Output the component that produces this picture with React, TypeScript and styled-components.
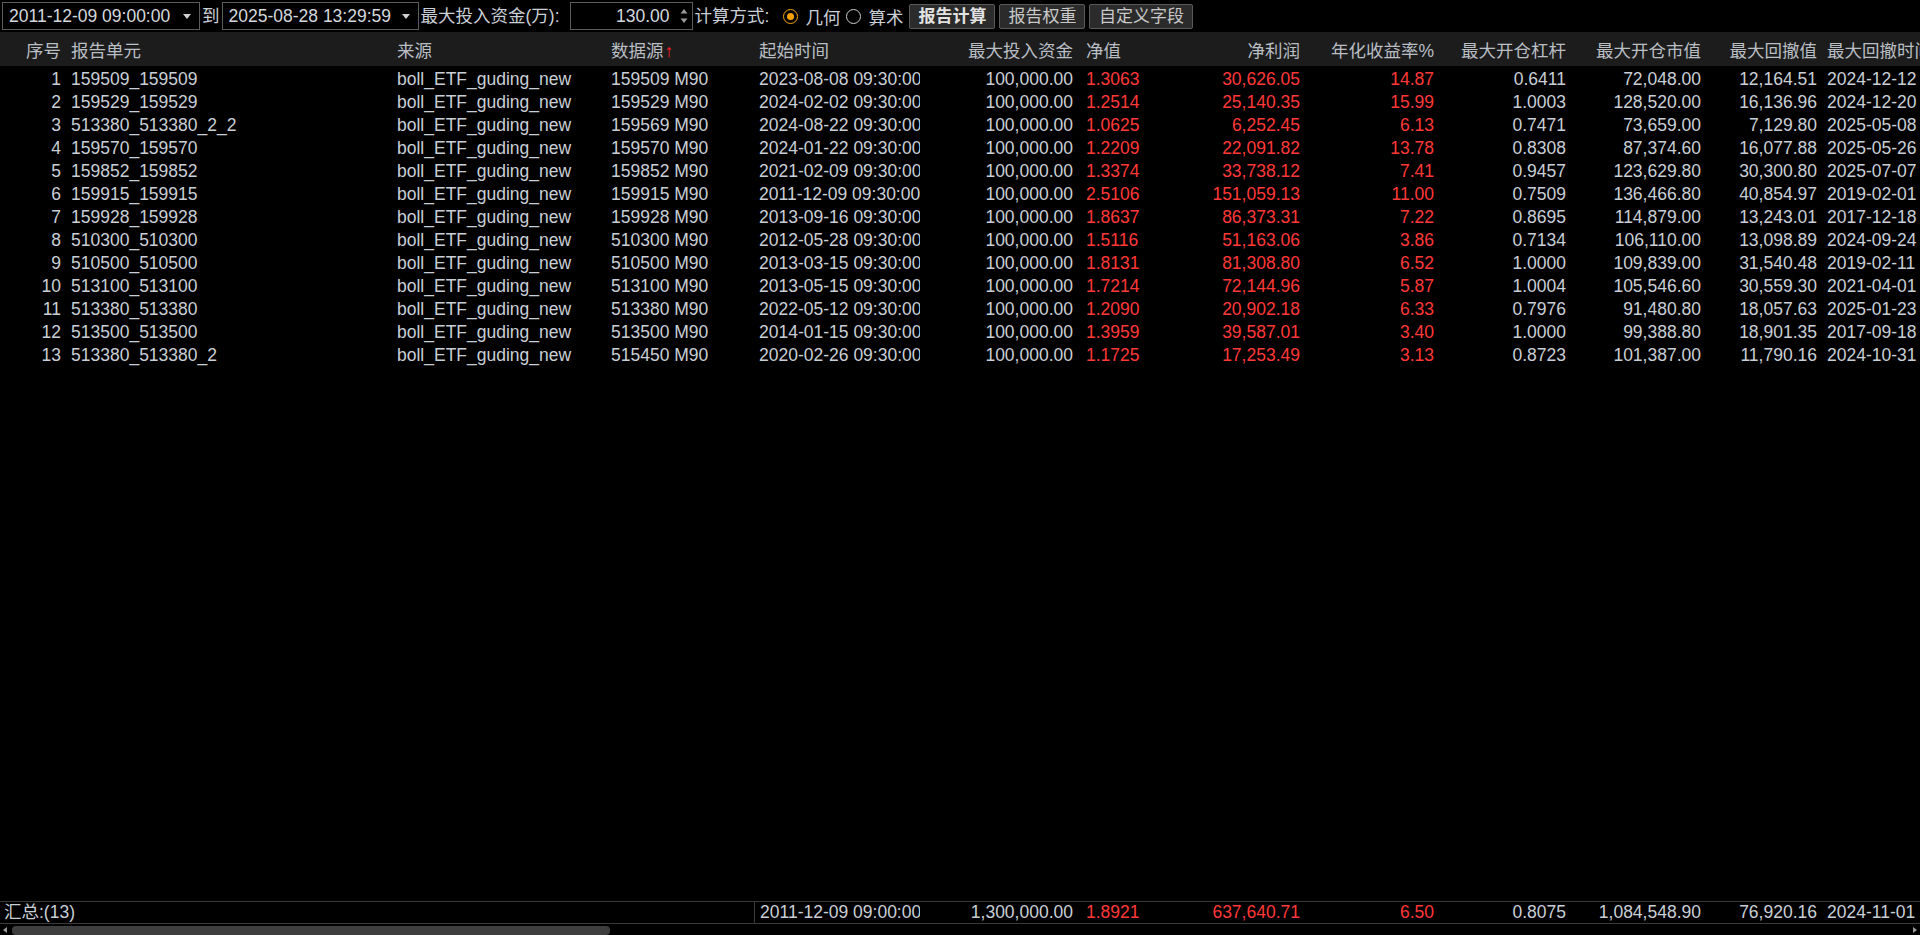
import React from 'react';
import styled, { createGlobalStyle } from 'styled-components';

const GlobalStyle = createGlobalStyle`
  html, body {
    margin: 0;
    padding: 0;
    background: #000;
  }
  body {
    font-family: "Liberation Sans", "Noto Sans CJK SC", sans-serif;
  }
`;

type Align = 'left' | 'right';

interface ColumnDef {
  title: string;
  width: number;
  align: Align;
  pad: number;
  red?: boolean;
  sortUp?: boolean;
}

const columns: ColumnDef[] = [
  { title: '序号', width: 66, align: 'right', pad: 5 },
  { title: '报告单元', width: 326, align: 'left', pad: 5 },
  { title: '来源', width: 214, align: 'left', pad: 5 },
  { title: '数据源', width: 148, align: 'left', pad: 5, sortUp: true },
  { title: '起始时间', width: 166, align: 'left', pad: 5 },
  { title: '最大投入资金', width: 158, align: 'right', pad: 5 },
  { title: '净值', width: 102, align: 'left', pad: 8, red: true },
  { title: '净利润', width: 125, align: 'right', pad: 5, red: true },
  { title: '年化收益率%', width: 134, align: 'right', pad: 5, red: true },
  { title: '最大开仓杠杆', width: 132, align: 'right', pad: 5 },
  { title: '最大开仓市值', width: 135, align: 'right', pad: 5 },
  { title: '最大回撤值', width: 116, align: 'right', pad: 5 },
  { title: '最大回撤时间', width: 200, align: 'left', pad: 5 },
];

const gridTemplate = columns.map((c) => `${c.width}px`).join(' ');

const rows: string[][] = [
  ['1', '159509_159509', '159509 M90', '2023-08-08', '1.3063', '30,626.05', '14.87', '0.6411', '72,048.00', '12,164.51', '2024-12-12'],
  ['2', '159529_159529', '159529 M90', '2024-02-02', '1.2514', '25,140.35', '15.99', '1.0003', '128,520.00', '16,136.96', '2024-12-20'],
  ['3', '513380_513380_2_2', '159569 M90', '2024-08-22', '1.0625', '6,252.45', '6.13', '0.7471', '73,659.00', '7,129.80', '2025-05-08'],
  ['4', '159570_159570', '159570 M90', '2024-01-22', '1.2209', '22,091.82', '13.78', '0.8308', '87,374.60', '16,077.88', '2025-05-26'],
  ['5', '159852_159852', '159852 M90', '2021-02-09', '1.3374', '33,738.12', '7.41', '0.9457', '123,629.80', '30,300.80', '2025-07-07'],
  ['6', '159915_159915', '159915 M90', '2011-12-09', '2.5106', '151,059.13', '11.00', '0.7509', '136,466.80', '40,854.97', '2019-02-01'],
  ['7', '159928_159928', '159928 M90', '2013-09-16', '1.8637', '86,373.31', '7.22', '0.8695', '114,879.00', '13,243.01', '2017-12-18'],
  ['8', '510300_510300', '510300 M90', '2012-05-28', '1.5116', '51,163.06', '3.86', '0.7134', '106,110.00', '13,098.89', '2024-09-24'],
  ['9', '510500_510500', '510500 M90', '2013-03-15', '1.8131', '81,308.80', '6.52', '1.0000', '109,839.00', '31,540.48', '2019-02-11'],
  ['10', '513100_513100', '513100 M90', '2013-05-15', '1.7214', '72,144.96', '5.87', '1.0004', '105,546.60', '30,559.30', '2021-04-01'],
  ['11', '513380_513380', '513380 M90', '2022-05-12', '1.2090', '20,902.18', '6.33', '0.7976', '91,480.80', '18,057.63', '2025-01-23'],
  ['12', '513500_513500', '513500 M90', '2014-01-15', '1.3959', '39,587.01', '3.40', '1.0000', '99,388.80', '18,901.35', '2017-09-18'],
  ['13', '513380_513380_2', '515450 M90', '2020-02-26', '1.1725', '17,253.49', '3.13', '0.8723', '101,387.00', '11,790.16', '2024-10-31'],
];

const App: React.FC = () => {
  return (
    <>
      <GlobalStyle />
      <Page>
        <Toolbar>
          <DateBox $width={198}>
            <span>2011-12-09 09:00:00</span>
            <Caret />
          </DateBox>
          <Label>到</Label>
          <DateBox $width={197}>
            <span>2025-08-28 13:29:59</span>
            <Caret />
          </DateBox>
          <Label>最大投入资金(万):</Label>
          <NumberBox>
            <span>130.00</span>
            <Spinner>
              <svg width="8" height="16" viewBox="0 0 8 16">
                <path d="M4 1 L7.5 5.5 H0.5 Z" fill="#9a9a9a" />
                <path d="M4 15 L7.5 10.5 H0.5 Z" fill="#9a9a9a" />
              </svg>
            </Spinner>
          </NumberBox>
          <Label>计算方式:</Label>
          <RadioGroup>
            <Radio $checked />
            <RadioText>几何</RadioText>
            <Radio />
            <RadioText>算术</RadioText>
          </RadioGroup>
          <ButtonGroup>
            <ToolButton $bold $width={86}>报告计算</ToolButton>
            <ToolButton $width={86}>报告权重</ToolButton>
            <ToolButton $width={104}>自定义字段</ToolButton>
          </ButtonGroup>
        </Toolbar>

        <Table>
          <HeaderRow>
            {columns.map((c) => (
              <HeaderCell key={c.title} $align={c.align} $pad={c.pad}>
                {c.title}
                {c.sortUp && <SortArrow>↑</SortArrow>}
              </HeaderCell>
            ))}
          </HeaderRow>

          <Body>
            {rows.map((r) => {
              const values = [
                r[0],
                r[1],
                'boll_ETF_guding_new',
                r[2],
                `${r[3]} 09:30:00`,
                '100,000.00',
                r[4],
                r[5],
                r[6],
                r[7],
                r[8],
                r[9],
                `${r[10]} 09:30:00`,
              ];
              return (
                <DataRow key={r[0]}>
                  {values.map((v, i) => (
                    <Cell key={i} $align={columns[i].align} $pad={columns[i].pad} $red={columns[i].red}>
                      {v}
                    </Cell>
                  ))}
                </DataRow>
              );
            })}
          </Body>

          <FooterRow>
            <SummaryLabel>汇总:(13)</SummaryLabel>
            <Cell $align="left" $pad={5} $divider>2011-12-09 09:00:00</Cell>
            <Cell $align="right" $pad={5}>1,300,000.00</Cell>
            <Cell $align="left" $pad={8} $red>1.8921</Cell>
            <Cell $align="right" $pad={5} $red>637,640.71</Cell>
            <Cell $align="right" $pad={5} $red>6.50</Cell>
            <Cell $align="right" $pad={5}>0.8075</Cell>
            <Cell $align="right" $pad={5}>1,084,548.90</Cell>
            <Cell $align="right" $pad={5}>76,920.16</Cell>
            <Cell $align="left" $pad={5}>2024-11-01 09:30:00</Cell>
          </FooterRow>
        </Table>

        <ScrollBar>
          <ScrollArrow $side="left" />
          <ScrollThumb />
          <ScrollArrow $side="right" />
        </ScrollBar>
      </Page>
    </>
  );
};

const Page = styled.div`
  width: 1920px;
  height: 935px;
  overflow: hidden;
  display: flex;
  flex-direction: column;
  background: #000;
  color: #c9cfd6;
  font-size: 17.5px;
`;

const Toolbar = styled.div`
  height: 32px;
  display: flex;
  align-items: center;
  padding-left: 2px;
  flex-shrink: 0;
`;

const DateBox = styled.div<{ $width: number }>`
  width: ${(p) => p.$width}px;
  height: 28px;
  box-sizing: border-box;
  border: 1px solid #5c5c5c;
  display: flex;
  align-items: center;
  justify-content: space-between;
  padding: 0 8px 0 6px;
  color: #d4d8dc;
  line-height: 26px;
`;

const Caret = styled.span`
  width: 0;
  height: 0;
  border-left: 4px solid transparent;
  border-right: 4px solid transparent;
  border-top: 5px solid #d0d0d0;
`;

const Label = styled.span`
  color: #c9cfd6;
  margin: 0 2px;
  white-space: nowrap;
  line-height: 28px;
`;

const NumberBox = styled.div`
  width: 123px;
  height: 28px;
  box-sizing: border-box;
  margin-left: 8px;
  border: 1px solid #5c5c5c;
  display: flex;
  align-items: center;
  justify-content: flex-end;
  padding-right: 4px;
  color: #d4d8dc;
`;

const Spinner = styled.span`
  display: flex;
  margin-left: 10px;
`;

const RadioGroup = styled.div`
  display: flex;
  align-items: center;
  margin-left: 12px;
`;

const Radio = styled.span<{ $checked?: boolean }>`
  width: 15px;
  height: 15px;
  box-sizing: border-box;
  border-radius: 50%;
  border: 1.6px solid ${(p) => (p.$checked ? '#f5a000' : '#d0d0d0')};
  display: flex;
  align-items: center;
  justify-content: center;
  &::after {
    content: '';
    width: 7px;
    height: 7px;
    border-radius: 50%;
    background: ${(p) => (p.$checked ? '#f5a000' : 'transparent')};
  }
`;

const RadioText = styled.span`
  margin: 0 6px 0 7px;
  color: #c9cfd6;
`;

const ButtonGroup = styled.div`
  display: flex;
  gap: 4px;
  margin-left: 0;
`;

const ToolButton = styled.button<{ $bold?: boolean; $width: number }>`
  width: ${(p) => p.$width}px;
  height: 25px;
  box-sizing: border-box;
  padding: 0;
  background: #2b2b2b;
  border: 1px solid #5a5a5a;
  border-radius: 2px;
  color: ${(p) => (p.$bold ? '#e2e2e2' : '#c8c8c8')};
  font-family: inherit;
  font-size: 17px;
  font-weight: ${(p) => (p.$bold ? 700 : 400)};
  line-height: 23px;
  cursor: pointer;
`;

const Table = styled.div`
  flex: 1;
  display: flex;
  flex-direction: column;
  min-height: 0;
`;

const HeaderRow = styled.div`
  display: grid;
  grid-template-columns: ${gridTemplate};
  height: 34px;
  background: #1c1c1c;
  color: #b9bec4;
  align-items: center;
  flex-shrink: 0;
`;

const HeaderCell = styled.div<{ $align: Align; $pad: number }>`
  text-align: ${(p) => p.$align};
  padding-${(p) => p.$align}: ${(p) => p.$pad}px;
  white-space: nowrap;
  overflow: hidden;
`;

const SortArrow = styled.span`
  color: #ff2020;
  margin-left: 1px;
`;

const Body = styled.div`
  flex: 1;
  min-height: 0;
  padding-top: 2px;
`;

const DataRow = styled.div`
  display: grid;
  grid-template-columns: ${gridTemplate};
  height: 23px;
  align-items: center;
`;

const Cell = styled.div<{ $align: Align; $pad: number; $red?: boolean; $divider?: boolean }>`
  text-align: ${(p) => p.$align};
  padding-${(p) => p.$align}: ${(p) => p.$pad}px;
  color: ${(p) => (p.$red ? '#ff3838' : '#c9cfd6')};
  white-space: nowrap;
  overflow: hidden;
  line-height: 21px;
  ${(p) => (p.$divider ? 'border-left: 1px solid #3c3c3c; align-self: stretch; display: flex; align-items: center;' : '')}
`;

const FooterRow = styled.div`
  display: grid;
  grid-template-columns: 754px ${columns
    .slice(4)
    .map((c) => `${c.width}px`)
    .join(' ')};
  height: 21px;
  box-sizing: content-box;
  border-top: 1px solid #3a3a3a;
  border-bottom: 1px solid #3a3a3a;
  align-items: center;
  flex-shrink: 0;
  margin-bottom: 1px;
`;

const SummaryLabel = styled.div`
  padding-left: 4px;
  color: #c9cfd6;
  line-height: 21px;
`;

const ScrollBar = styled.div`
  height: 10px;
  display: flex;
  align-items: center;
  flex-shrink: 0;
`;

const ScrollThumb = styled.div`
  width: 598px;
  height: 9px;
  margin-left: 5px;
  border-radius: 4px;
  background: #3e3e3e;
`;

const ScrollArrow = styled.span<{ $side: 'left' | 'right' }>`
  width: 0;
  height: 0;
  border-top: 3px solid transparent;
  border-bottom: 3px solid transparent;
  ${(p) =>
    p.$side === 'left'
      ? 'border-right: 4px solid #9a9a9a; margin-left: 3px;'
      : 'border-left: 4px solid #9a9a9a; margin-left: auto; margin-right: 3px;'}
`;

export default App;
